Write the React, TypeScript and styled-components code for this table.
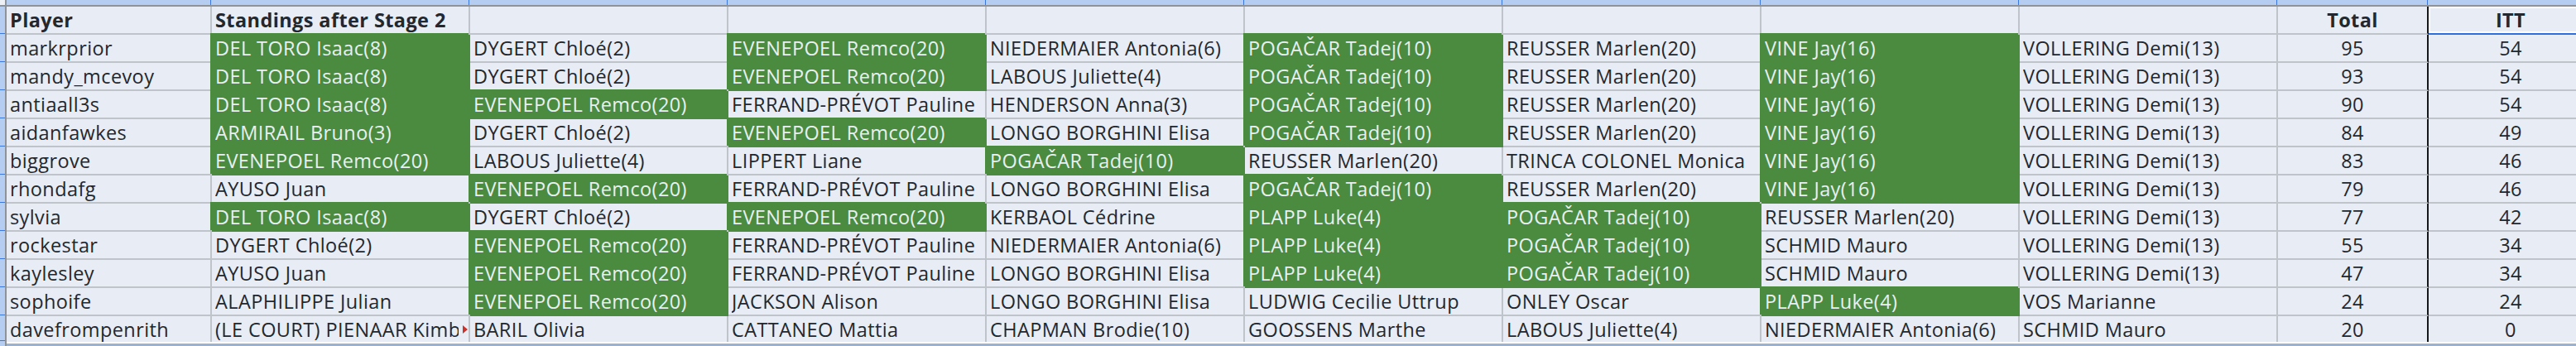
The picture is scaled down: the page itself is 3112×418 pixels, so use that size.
import React from 'react';
import styled, { createGlobalStyle, css } from 'styled-components';

const GREEN = '#4a8b3f';
const LINE = '#bfc4cb';
const CELL = '#e8edf5';
const TICK = '#3a78e0';
const COLUMNS = '248px repeat(8, 312px) 182px 200px';

type Pick = { name: string; hit?: boolean };
type Entry = { player: string; picks: Pick[]; total: number; itt: number };

const g = (name: string): Pick => ({ name, hit: true });
const p = (name: string): Pick => ({ name });

const entries: Entry[] = [
	{
		player: 'markrprior',
		picks: [g('DEL TORO Isaac(8)'), p('DYGERT Chloé(2)'), g('EVENEPOEL Remco(20)'), p('NIEDERMAIER Antonia(6)'), g('POGAČAR Tadej(10)'), p('REUSSER Marlen(20)'), g('VINE Jay(16)'), p('VOLLERING Demi(13)')],
		total: 95,
		itt: 54,
	},
	{
		player: 'mandy_mcevoy',
		picks: [g('DEL TORO Isaac(8)'), p('DYGERT Chloé(2)'), g('EVENEPOEL Remco(20)'), p('LABOUS Juliette(4)'), g('POGAČAR Tadej(10)'), p('REUSSER Marlen(20)'), g('VINE Jay(16)'), p('VOLLERING Demi(13)')],
		total: 93,
		itt: 54,
	},
	{
		player: 'antiaall3s',
		picks: [g('DEL TORO Isaac(8)'), g('EVENEPOEL Remco(20)'), p('FERRAND-PRÉVOT Pauline'), p('HENDERSON Anna(3)'), g('POGAČAR Tadej(10)'), p('REUSSER Marlen(20)'), g('VINE Jay(16)'), p('VOLLERING Demi(13)')],
		total: 90,
		itt: 54,
	},
	{
		player: 'aidanfawkes',
		picks: [g('ARMIRAIL Bruno(3)'), p('DYGERT Chloé(2)'), g('EVENEPOEL Remco(20)'), p('LONGO BORGHINI Elisa'), g('POGAČAR Tadej(10)'), p('REUSSER Marlen(20)'), g('VINE Jay(16)'), p('VOLLERING Demi(13)')],
		total: 84,
		itt: 49,
	},
	{
		player: 'biggrove',
		picks: [g('EVENEPOEL Remco(20)'), p('LABOUS Juliette(4)'), p('LIPPERT Liane'), g('POGAČAR Tadej(10)'), p('REUSSER Marlen(20)'), p('TRINCA COLONEL Monica'), g('VINE Jay(16)'), p('VOLLERING Demi(13)')],
		total: 83,
		itt: 46,
	},
	{
		player: 'rhondafg',
		picks: [p('AYUSO Juan'), g('EVENEPOEL Remco(20)'), p('FERRAND-PRÉVOT Pauline'), p('LONGO BORGHINI Elisa'), g('POGAČAR Tadej(10)'), p('REUSSER Marlen(20)'), g('VINE Jay(16)'), p('VOLLERING Demi(13)')],
		total: 79,
		itt: 46,
	},
	{
		player: 'sylvia',
		picks: [g('DEL TORO Isaac(8)'), p('DYGERT Chloé(2)'), g('EVENEPOEL Remco(20)'), p('KERBAOL Cédrine'), g('PLAPP Luke(4)'), g('POGAČAR Tadej(10)'), p('REUSSER Marlen(20)'), p('VOLLERING Demi(13)')],
		total: 77,
		itt: 42,
	},
	{
		player: 'rockestar',
		picks: [p('DYGERT Chloé(2)'), g('EVENEPOEL Remco(20)'), p('FERRAND-PRÉVOT Pauline'), p('NIEDERMAIER Antonia(6)'), g('PLAPP Luke(4)'), g('POGAČAR Tadej(10)'), p('SCHMID Mauro'), p('VOLLERING Demi(13)')],
		total: 55,
		itt: 34,
	},
	{
		player: 'kaylesley',
		picks: [p('AYUSO Juan'), g('EVENEPOEL Remco(20)'), p('FERRAND-PRÉVOT Pauline'), p('LONGO BORGHINI Elisa'), g('PLAPP Luke(4)'), g('POGAČAR Tadej(10)'), p('SCHMID Mauro'), p('VOLLERING Demi(13)')],
		total: 47,
		itt: 34,
	},
	{
		player: 'sophoife',
		picks: [p('ALAPHILIPPE Julian'), g('EVENEPOEL Remco(20)'), p('JACKSON Alison'), p('LONGO BORGHINI Elisa'), p('LUDWIG Cecilie Uttrup'), p('ONLEY Oscar'), g('PLAPP Luke(4)'), p('VOS Marianne')],
		total: 24,
		itt: 24,
	},
	{
		player: 'davefrompenrith',
		picks: [p('(LE COURT) PIENAAR Kimberley'), p('BARIL Olivia'), p('CATTANEO Mattia'), p('CHAPMAN Brodie(10)'), p('GOOSSENS Marthe'), p('LABOUS Juliette(4)'), p('NIEDERMAIER Antonia(6)'), p('SCHMID Mauro')],
		total: 20,
		itt: 0,
	},
];

const GlobalStyle = createGlobalStyle`
	html, body {
		margin: 0;
		padding: 0;
		background: ${CELL};
		overflow: hidden;
	}
`;

const Page = styled.div`
	display: grid;
	grid-template-columns: 8px 1fr;
	grid-template-rows: 8px 1fr;
	width: 3112px;
	height: 418px;
	overflow: hidden;
	font-family: 'Open Sans', 'Liberation Sans', sans-serif;
`;

const Corner = styled.div`
	background: #edf1f6;
	border-right: 2px solid #8e939a;
	border-bottom: 2px solid #8e939a;
	box-sizing: border-box;
`;

const ColumnStrip = styled.div`
	display: grid;
	grid-template-columns: ${COLUMNS};
	background: #b4cdf1;
	border-bottom: 2px solid #8e939a;
	box-sizing: border-box;
`;

const ColumnTick = styled.div`
	border-right: 1px solid ${TICK};
	margin-right: 1px;
`;

const RowStrip = styled.div`
	display: grid;
	grid-template-rows: repeat(11, 34px) 31px;
	background: #b4cdf1;
	border-right: 2px solid #8e939a;
	box-sizing: border-box;
`;

const RowTick = styled.div`
	border-bottom: 1px solid ${TICK};
	margin-bottom: 1px;
`;

const Body = styled.div`
	display: flex;
	flex-direction: column;
	overflow: hidden;
`;

const Table = styled.div`
	display: grid;
	grid-template-columns: ${COLUMNS};
	grid-template-rows: repeat(11, 34px) 31px;
	width: max-content;
`;

type CellProps = {
	$hit?: boolean;
	$bold?: boolean;
	$center?: boolean;
	$last?: boolean;
	$divider?: boolean;
	$clipped?: boolean;
	$selected?: boolean;
};

const Cell = styled.div<CellProps>`
	position: relative;
	display: flex;
	align-items: center;
	justify-content: ${(props) => (props.$center ? 'center' : 'flex-start')};
	box-sizing: border-box;
	padding: 0 4px 0 4px;
	overflow: hidden;
	white-space: nowrap;
	font-size: 23.5px;
	letter-spacing: 0.4px;
	font-weight: ${(props) => (props.$bold ? 700 : 400)};
	color: #23272e;
	background: ${CELL};
	border-right: 2px solid ${(props) => (props.$divider ? '#15171a' : LINE)};
	border-bottom: ${(props) => (props.$last ? 'none' : `2px solid ${LINE}`)};

	${(props) =>
		props.$hit &&
		css`
			background: ${GREEN};
			color: #e9eff2;
			border-right-color: ${GREEN};
			border-bottom-color: ${GREEN};
			box-shadow: -2px -2px 0 ${GREEN};
		`}

	${(props) =>
		props.$selected &&
		css`
			border-bottom-color: #2e6fe0;
			box-shadow: inset 0 0 0 2px #ffffff;
		`}

	${(props) =>
		props.$clipped &&
		css`
			padding-right: 12px;

			&::after {
				content: '';
				position: absolute;
				right: 1px;
				top: 50%;
				margin-top: -5px;
				border-left: 6px solid #c8322b;
				border-top: 5px solid transparent;
				border-bottom: 5px solid transparent;
			}
		`}
`;

const CellText = styled.span`
	min-width: 0;
	overflow: hidden;
	text-overflow: clip;
`;

const BottomEdge = styled.div`
	width: 100%;
	height: 2px;
	background: #ffffff;
	border-bottom: 3px solid #9cb1ce;
`;

const App: React.FC = () => {
	const tickCols = Array.from({ length: 11 });
	const tickRows = Array.from({ length: 12 });

	return (
		<Page>
			<GlobalStyle />
			<Corner />
			<ColumnStrip>
				{tickCols.map((_, i) => (
					<ColumnTick key={i} />
				))}
			</ColumnStrip>
			<RowStrip>
				{tickRows.map((_, i) => (
					<RowTick key={i} />
				))}
			</RowStrip>
			<Body>
				<Table>
					<Cell $bold>Player</Cell>
					<Cell $bold>Standings after Stage 2</Cell>
					{Array.from({ length: 7 }).map((_, i) => (
						<Cell key={`h${i}`} />
					))}
					<Cell $bold $center $divider>
						Total
					</Cell>
					<Cell $bold $center $selected>
						ITT
					</Cell>

					{entries.map((entry, r) => {
						const last = r === entries.length - 1;
						return (
							<React.Fragment key={entry.player}>
								<Cell $last={last}>{entry.player}</Cell>
								{entry.picks.map((pick, c) => (
									<Cell
										key={c}
										$hit={pick.hit}
										$last={last}
										$clipped={pick.name.length > 26}
									>
										<CellText>{pick.name}</CellText>
									</Cell>
								))}
								<Cell $center $divider $last={last}>
									{entry.total}
								</Cell>
								<Cell $center $last={last}>
									{entry.itt}
								</Cell>
							</React.Fragment>
						);
					})}
				</Table>
				<BottomEdge />
			</Body>
		</Page>
	);
};

export default App;
